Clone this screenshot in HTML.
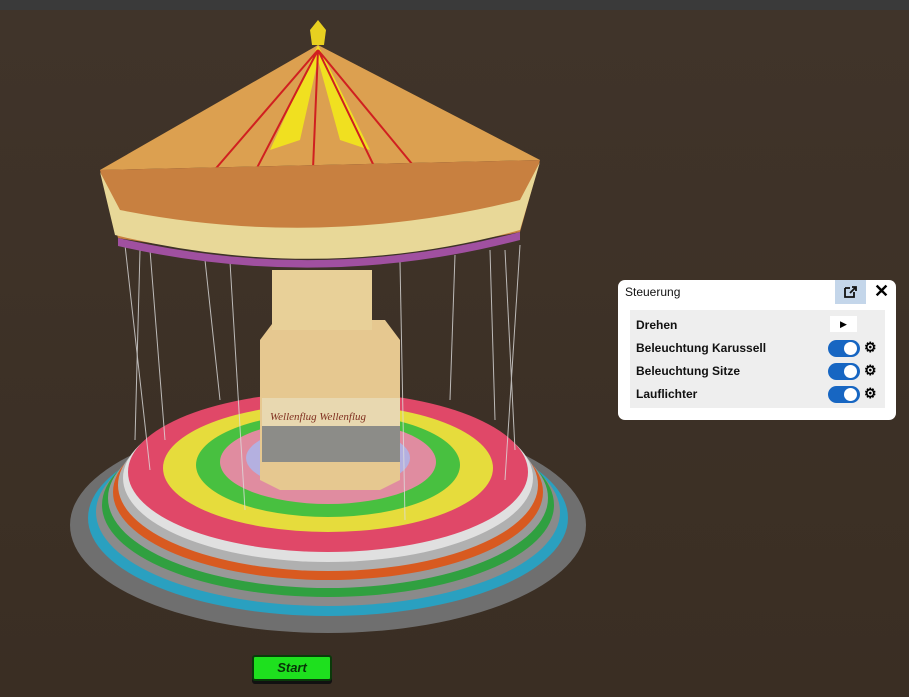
<!DOCTYPE html>
<html><head><meta charset="utf-8"><style>
body{margin:0;width:909px;height:697px;overflow:hidden;background:#3d3126;font-family:"Liberation Sans",sans-serif;position:relative}
#p{position:absolute;left:618px;top:280px;width:278px;height:140px;background:#fff;border-radius:7px}
#t{position:absolute;left:7px;top:5px;font-size:12px;color:#111}
#ib{position:absolute;left:217px;top:0;width:31px;height:24px;background:#c4d6ea}
#x{position:absolute;left:256px;top:1px;font-size:18px;font-weight:bold}
#in{position:absolute;left:12px;top:30px;width:255px;height:98px;background:#eee}
.r{position:absolute;left:6px;font-size:12px;font-weight:bold;color:#111}
.tg{position:absolute;left:198px;width:32px;height:17px;border-radius:9px;background:#1766c2}
.tg:after{content:"";position:absolute;right:3px;top:2px;width:13px;height:13px;border-radius:50%;background:#fff}
.g{position:absolute;left:234px;font-size:14px;font-weight:bold}
#pl{position:absolute;left:200px;top:6px;width:27px;height:16px;background:#fff;font-size:9px;text-align:center;line-height:16px}
#st{position:absolute;left:252px;top:655px;width:76px;height:22px;background:#1ee01e;border:2px solid #0a3a0a;border-radius:3px;text-align:center;font-weight:bold;font-style:italic;font-size:13px;line-height:21px;color:#083308;box-shadow:0 3px 0 #111}
</style></head><body>
<svg width="909" height="697" style="position:absolute;left:0;top:0">
<defs><linearGradient id="w" x1="0" y1="0" x2="0" y2="1"><stop offset="0" stop-color="#40342a"/><stop offset="1" stop-color="#3a2e23"/></linearGradient></defs>
<rect width="909" height="697" fill="url(#w)"/>
<rect width="909" height="10" fill="#3a3a3a"/>
<ellipse cx="328" cy="525" rx="258" ry="108" fill="#6f6f6f"/>
<ellipse cx="328" cy="518" rx="240" ry="98" fill="#2aa0c0"/>
<ellipse cx="328" cy="512" rx="232" ry="94" fill="#8a8a8a"/>
<ellipse cx="328" cy="505" rx="226" ry="92" fill="#30a040"/>
<ellipse cx="328" cy="498" rx="220" ry="90" fill="#999"/>
<ellipse cx="328" cy="492" rx="215" ry="88" fill="#d85a20"/>
<ellipse cx="328" cy="485" rx="210" ry="86" fill="#b0b0b0"/>
<ellipse cx="328" cy="478" rx="205" ry="84" fill="#e0e0e0"/>
<ellipse cx="328" cy="472" rx="200" ry="80" fill="#e04868"/>
<ellipse cx="328" cy="468" rx="165" ry="64" fill="#e6dc3c"/>
<ellipse cx="328" cy="465" rx="132" ry="52" fill="#48c040"/>
<ellipse cx="328" cy="462" rx="108" ry="42" fill="#e08ca0"/>
<ellipse cx="328" cy="458" rx="82" ry="32" fill="#b4b0e0"/>
<g stroke="#ddd" stroke-width="1" opacity=".8">
<line x1="125" y1="245" x2="150" y2="470"/><line x1="150" y1="250" x2="165" y2="440"/><line x1="205" y1="260" x2="220" y2="400"/><line x1="230" y1="262" x2="245" y2="510"/><line x1="455" y1="255" x2="450" y2="400"/><line x1="490" y1="250" x2="495" y2="420"/><line x1="520" y1="245" x2="505" y2="480"/><line x1="400" y1="262" x2="405" y2="520"/><line x1="140" y1="250" x2="135" y2="440"/><line x1="505" y1="250" x2="515" y2="450"/>
</g>
<path d="M260 340 L275 320 L385 320 L400 340 L400 480 L380 490 L280 490 L260 480Z" fill="#e6c890"/>
<rect x="272" y="270" width="100" height="60" fill="#e8d098"/>
<rect x="262" y="400" width="138" height="62" fill="#8c8c88"/>
<rect x="262" y="398" width="138" height="28" fill="#e8d8b0"/>
<text x="270" y="420" font-size="11" font-family="Liberation Serif" font-style="italic" fill="#803020">Wellenflug Wellenflug</text>
<path d="M318 20 L326 30 L324 45 L312 45 L310 30Z" fill="#e8d020"/>
<path d="M318 45 L100 170 L540 160Z" fill="#dca050"/>
<path d="M318 45 L270 150 L300 140 L318 60 L340 140 L370 150Z" fill="#f0e020"/>
<path d="M318 50 L180 210 M318 50 L450 210 M318 50 L310 240 M318 50 L230 220 M318 50 L400 220" stroke="#d02020" stroke-width="2"/>
<path d="M100 170 L540 160 L520 232 Q320 272 118 238Z" fill="#c88040"/>
<path d="M100 172 L115 235 Q320 285 520 230 L540 162 L520 200 Q320 250 120 210Z" fill="#e8d898"/>
<path d="M118 238 Q320 285 520 232 L520 240 Q320 292 118 246Z" fill="#a050a0"/>
</svg>
<div id="p"><div id="t">Steuerung</div><div id="ib"><svg width="31" height="24"><path d="M10 8h5M10 8v9h9v-5M15 13l6-6M17 7h4v4" stroke="#111" stroke-width="1.8" fill="none"/></svg></div><div id="x">✕</div>
<div id="in"><div class="r" style="top:8px">Drehen</div><div id="pl">▶</div>
<div class="r" style="top:31px">Beleuchtung Karussell</div><div class="tg" style="top:30px"></div><div class="g" style="top:29px">⚙</div>
<div class="r" style="top:54px">Beleuchtung Sitze</div><div class="tg" style="top:53px"></div><div class="g" style="top:52px">⚙</div>
<div class="r" style="top:77px">Lauflichter</div><div class="tg" style="top:76px"></div><div class="g" style="top:75px">⚙</div></div></div>
<div id="st">Start</div>
</body></html>
